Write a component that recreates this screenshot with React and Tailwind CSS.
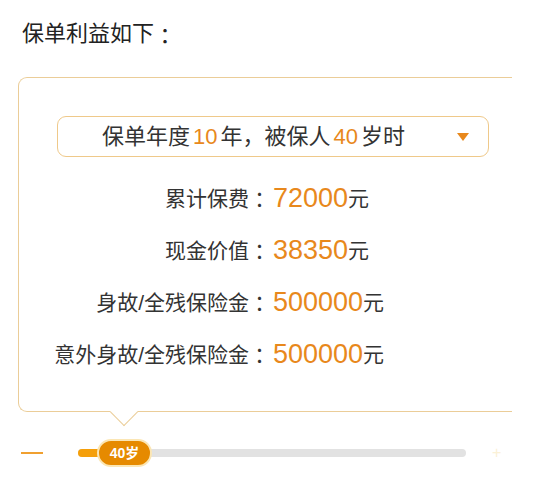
export default function App() {
  const font = { fontFamily: '"Liberation Sans", "Noto Sans CJK SC", sans-serif' };
  const colonFont = { fontFamily: '"Noto Sans CJK JP", sans-serif' };
  const rows = [
    ["累计保费", "72000"],
    ["现金价值", "38350"],
    ["身故/全残保险金", "500000"],
    ["意外身故/全残保险金", "500000"],
  ];
  return (
    <div className="w-[533px] h-[487px] bg-white overflow-hidden text-[#333]" style={font}>
      <div className="pt-[19px]">
        <div className="pl-[22px] h-[30px] flex items-center text-[22px] leading-none text-[#222]">
          <span>保单利益如下</span>
          <span style={colonFont}>：</span>
        </div>
      </div>
      <div className="mt-[28px] ml-[18px] w-[494px] relative border-l border-t border-b border-[#ebcd98] rounded-l-[9px] pt-[38px] pb-[31px]">
        <div className="ml-[38px] w-[432px] h-[41px] border border-[#efc98a] rounded-[9px] relative flex items-center pl-[44px] text-[22px] leading-none">
          <span>保单年度</span>
          <span className="text-[#e8881c] mx-[3px]">10</span>
          <span>年，被保人</span>
          <span className="text-[#e8881c] mx-[3px]">40</span>
          <span>岁时</span>
          <div className="absolute right-[19px] top-[16px] w-0 h-0 border-l-[6px] border-r-[6px] border-t-[8px] border-l-transparent border-r-transparent border-t-[#e8881c]" />
        </div>
        <div className="mt-[15px] flex flex-col">
          {rows.map(([label, value]) => (
            <div key={label} className="h-[52px] flex items-center">
              <div className="w-[251px] flex items-center justify-end text-[21px] leading-none">
                <span>{label}</span>
                <span style={colonFont}>：</span>
              </div>
              <div className="text-[27px] leading-none text-[#e8881c] pl-[3px]">{value}</div>
              <div className="text-[21px] leading-none">元</div>
            </div>
          ))}
        </div>
        <div className="absolute left-[95px] -bottom-[11px] w-[20px] h-[20px] bg-white border-r border-b border-[#ebcd98] rotate-45" />
      </div>
      <div className="mt-[26px] h-[30px] flex items-center">
        <div className="ml-[21px] w-[22px] h-[2px] bg-[#f0a030]" />
        <div className="ml-[35px] w-[388px] h-[8px] rounded-full bg-[#e2e2e2] relative">
          <div className="absolute left-0 top-0 h-[8px] w-[30px] rounded-full bg-[#f59f0a]" />
          <div className="absolute left-[19px] top-1/2 -translate-y-1/2 w-[55px] h-[28px] rounded-full bg-[#e68a00] border-2 border-[#fbe6b4] flex items-center justify-center text-white text-[14px] font-bold leading-none">
            40岁
          </div>
        </div>
        <div className="ml-[26px] text-[16px] leading-none text-[#fbf1d6]">+</div>
      </div>
    </div>
  );
}
